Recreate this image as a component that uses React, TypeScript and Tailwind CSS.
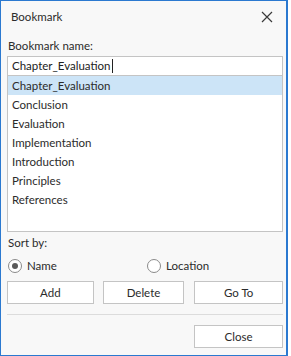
import { useState } from "react";

const items = [
  "Chapter_Evaluation",
  "Conclusion",
  "Evaluation",
  "Implementation",
  "Introduction",
  "Principles",
  "References",
];

const Radio = ({ checked, label }: { checked: boolean; label: string }) => (
  <div className="flex items-center gap-[5px]">
    <div className="w-[14px] h-[14px] rounded-full border border-[#8a8a8a] bg-white flex items-center justify-center">
      {checked && <div className="w-[6px] h-[6px] rounded-full bg-[#5a5a5a]" />}
    </div>
    <span>{label}</span>
  </div>
);

const Btn = ({ label, className }: { label: string; className: string }) => (
  <button
    className={`h-[23px] border border-[#c4c4c4] bg-white text-[#2b2b2b] leading-none ${className}`}
  >
    {label}
  </button>
);

export default function App() {
  const [selected] = useState(0);

  return (
    <div
      className="w-[288px] h-[356px] border border-r-2 border-[#2b79d0] bg-[#f8f8f8] text-[11.5px] text-[#2b2b2b] flex flex-col"
      style={{ fontFamily: 'Lato, "Noto Sans", sans-serif' }}
    >
      <div className="h-[31px] flex items-center justify-between pl-[10px] pr-[13px]">
        <span>Bookmark</span>
        <svg width="12" height="12" viewBox="0 0 12 12">
          <path d="M1 1 L11 11 M11 1 L1 11" stroke="#3a3a3a" strokeWidth="1.2" fill="none" />
        </svg>
      </div>

      <div className="flex flex-col pl-[6px] pr-[3px]">
        <div className="h-[16px] leading-[16px] mt-[6px] pl-[1px]">Bookmark name:</div>
        <div className="mt-[2px] h-[20px] border border-[#c4c4c4] bg-white flex items-center pl-[4px] text-[#222]">
          Chapter_Evaluation
          <span className="w-px h-[14px] bg-[#222] ml-px" />
        </div>
        <div className="h-[156px] border border-t-0 border-[#c4c4c4] bg-white flex flex-col">
          {items.map((it, i) => (
            <div
              key={it}
              className={`h-[19px] flex items-center pl-[4px] ${i === selected ? "bg-[#cce4f7]" : ""}`}
            >
              {it}
            </div>
          ))}
        </div>

        <div className="h-[16px] leading-[16px] mt-[3px] pl-[1px]">Sort by:</div>
        <div className="h-[16px] mt-[7px] flex items-center pl-[1px]">
          <div className="w-[139px]">
            <Radio checked label="Name" />
          </div>
          <Radio checked={false} label="Location" />
        </div>

        <div className="mt-[7px] flex">
          <Btn label="Add" className="w-[87px]" />
          <Btn label="Delete" className="w-[82px] ml-[9px]" />
          <Btn label="Go To" className="w-[89px] ml-[10px]" />
        </div>

        <div className="mt-[10px] h-px bg-[#dcdcdc]" />

        <div className="mt-[10px] flex justify-end">
          <Btn label="Close" className="w-[89px]" />
        </div>
      </div>
    </div>
  );
}
